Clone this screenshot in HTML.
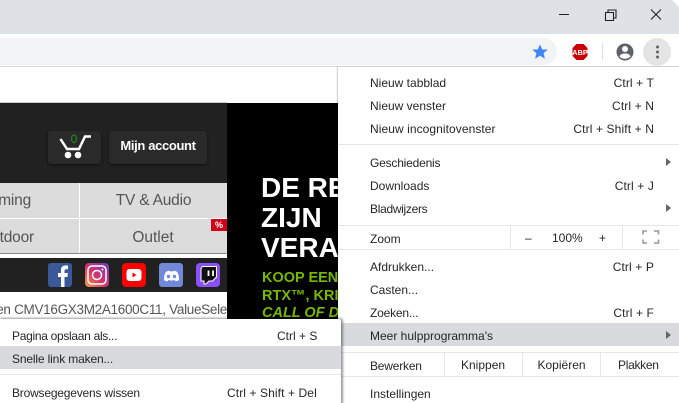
<!DOCTYPE html>
<html><head><meta charset="utf-8">
<style>
html,body{margin:0;padding:0}
body{width:679px;height:403px;overflow:hidden;position:relative;background:#fff;font-family:"Liberation Sans",sans-serif}
.a{position:absolute}
.t{position:absolute;font-size:12px;line-height:16px;color:#262626;white-space:nowrap}
.r{position:absolute;font-size:12px;line-height:16px;color:#262626;white-space:nowrap;right:25px;letter-spacing:.12px}
.l{position:absolute;left:338px;right:0;height:1px;background:#e6e6e6}
.v{position:absolute;width:1px;background:#e6e6e6}
.g{position:absolute;font-size:15.5px;line-height:20px;color:#555;white-space:nowrap;text-align:center;letter-spacing:-.2px}
.ar{position:absolute;left:666px;width:0;height:0;border-left:5px solid #666;border-top:4px solid transparent;border-bottom:4px solid transparent}
.big{position:absolute;color:#fff;font-size:28px;line-height:30px;font-weight:bold;white-space:nowrap}
.gr{position:absolute;color:#76b900;font-size:14.5px;line-height:16px;font-weight:bold;white-space:nowrap}
</style></head>
<body>
<!-- browser chrome -->
<div class="a" style="left:0;top:0;width:679px;height:34px;background:#dee1e6"></div>
<div class="a" style="left:672px;top:0;width:7px;height:7px;background:#fff;clip-path:polygon(0 0,100% 0,100% 100%)"></div>
<div class="a" style="left:0;top:34px;width:679px;height:32px;background:#fff"></div>
<div class="a" style="left:0;top:66px;width:679px;height:1px;background:#d8d8d8"></div>
<div class="a" style="left:-20px;top:38px;width:577px;height:27px;background:#f1f3f4;border-radius:14px"></div>
<svg class="a" style="left:0;top:0" width="679" height="67" viewBox="0 0 679 67">
 <path d="M559 14.500h10" stroke="#222" stroke-width="1" fill="none"/>
 <path d="M605.500 12.500h8v8h-8zM608 12.500v-2.500h8v8h-2.500" stroke="#222" stroke-width="1.100" fill="none"/>
 <path d="M651 9.500l10 10M661 9.500l-10 10" stroke="#222" stroke-width="1.100" fill="none"/>
 <path d="M540 44.500l2.300 5h5.500l-4.200 3.800 1.300 5.500-4.900-3-4.900 3 1.300-5.500-4.200-3.800h5.500z" fill="#4285f4"/>
 <path d="M576.500 44h7l4 4v8l-4 4h-7l-4-4v-8z" fill="#c00"/>
 <text x="580" y="55" font-family="Liberation Sans" font-size="7.500" font-weight="bold" fill="#fff" text-anchor="middle">ABP</text>
 <path d="M602.500 43v17" stroke="#ddd" stroke-width="1"/>
 <circle cx="625" cy="52" r="8.500" fill="#5f6368"/>
 <circle cx="625" cy="49" r="3" fill="#fff"/>
 <path d="M619.500 56.500c1-2.500 3-3 5.500-3s4.500 .5 5.500 3c-1.500 1.500-3.300 2.200-5.500 2.200s-4-.7-5.500-2.200z" fill="#fff"/>
 <circle cx="657" cy="52" r="14" fill="#e4e4e4"/>
 <circle cx="657.500" cy="47" r="1.500" fill="#5f6368"/><circle cx="657.500" cy="52" r="1.500" fill="#5f6368"/><circle cx="657.500" cy="57" r="1.500" fill="#5f6368"/>
</svg>

<!-- page -->
<div class="a" style="left:0;top:102px;width:227px;height:1px;background:#ccc"></div>
<div class="a" style="left:0;top:103px;width:227px;height:80px;background:#212121"></div>
<div class="a" style="left:48px;top:131px;width:53px;height:33px;background:#2a2a2a;border-radius:3px;box-shadow:0 1px 2px #111"></div>
<svg class="a" style="left:48px;top:131px" width="53" height="33">
 <path d="M12.500 8l6.500 10h12l6-12.500h6" stroke="#fff" stroke-width="2.500" fill="none"/>
 <circle cx="20" cy="24" r="3.300" fill="#fff"/><circle cx="30" cy="24" r="3.300" fill="#fff"/>
 <text x="26" y="12" font-family="Liberation Sans" font-size="12" fill="#1c9c1c" text-anchor="middle">0</text>
</svg>
<div class="a" style="left:109px;top:131px;width:98px;height:33px;background:#2a2a2a;border-radius:3px;box-shadow:0 1px 2px #111;color:#fff;font-size:13px;font-weight:bold;line-height:30px;text-align:center;letter-spacing:-.35px">Mijn account</div>

<div class="a" style="left:0;top:183px;width:227px;height:70px;background:#dcdcdc"></div>
<div class="a" style="left:79px;top:183px;width:1px;height:70px;background:#fff"></div>
<div class="a" style="left:0;top:218px;width:227px;height:1px;background:#fff"></div>
<div class="a" style="left:0;top:253px;width:227px;height:1px;background:#888"></div>
<div class="g" style="right:648px;top:191px">ming</div>
<div class="g" style="left:80px;width:147px;top:191px">TV &amp; Audio</div>
<div class="g" style="right:645px;top:228px">tdoor</div>
<div class="g" style="left:80px;width:146px;top:228px;letter-spacing:0">Outlet</div>
<div class="a" style="left:211px;top:219px;width:16px;height:12px;background:#d0021b;color:#fff;font-size:9px;font-weight:bold;line-height:12px;text-align:center">%</div>

<div class="a" style="left:0;top:258px;width:227px;height:34px;background:#212121"></div>
<svg class="a" style="left:48px;top:263px" width="172" height="24">
 <rect x="0" y="0" width="24" height="24" rx="3" fill="#3b5998"/>
 <path d="M13 24v-10h-3v-4h3v-3c0-3 1.800-4.500 4.300-4.500h2.700v3.800h-1.800c-1.300 0-1.700.7-1.700 1.700v2h3.400l-.5 4h-2.900v10z" fill="#fff"/>
 <defs><linearGradient id="ig" x1="0" y1="1" x2="1" y2="0"><stop offset="0" stop-color="#f9a03c"/><stop offset=".45" stop-color="#d6336c"/><stop offset="1" stop-color="#6a3fc4"/></linearGradient></defs>
 <rect x="37" y="0" width="24" height="24" rx="4" fill="url(#ig)"/>
 <rect x="40" y="3" width="18" height="18" rx="4" fill="none" stroke="#fff" stroke-width="1.500"/>
 <circle cx="49" cy="12" r="4.500" fill="none" stroke="#fff" stroke-width="1.500"/>
 <circle cx="54.500" cy="6.500" r="1" fill="#fff"/>
 <rect x="74" y="0" width="24" height="24" rx="4" fill="#f00"/>
 <rect x="78.500" y="6" width="15" height="12" rx="3" fill="#fff"/>
 <path d="M84.500 9.500v5l4-2.500z" fill="#f00"/>
 <rect x="111" y="0" width="24" height="24" rx="3" fill="#7289da"/>
 <path d="M116 17c-.2-3.500.6-6 1.800-8 1.500-.9 3-1.200 3.700-1.200l.4.700c1-.2 2.200-.2 3.200 0l.4-.7c.8 0 2.200.3 3.700 1.200 1.200 2 2 4.500 1.800 8-1.200.9-2.500 1.300-3.300 1.400l-.9-1.400c-2.200.6-4.400.6-6.600 0l-.9 1.400c-.8-.1-2.100-.5-3.300-1.400z" fill="#fff"/>
 <circle cx="120.500" cy="13.500" r="1.700" fill="#7289da"/><circle cx="126.500" cy="13.500" r="1.700" fill="#7289da"/>
 <rect x="148" y="0" width="24" height="24" rx="4" fill="#8a4fff"/>
 <path d="M153 5.500l1.500-2h14v10.500l-4 4h-3.500l-3 3h-2v-3h-3z" fill="#111" stroke="#fff" stroke-width="1"/>
 <path d="M160.500 7.500v5.500M165 7.500v5.500" stroke="#fff" stroke-width="1.800"/>
</svg>
<div class="a" style="left:0;top:302px;width:227px;height:17px;overflow:hidden">
 <div class="a" style="right:0;top:0;font-size:13.500px;line-height:16px;color:#555;white-space:nowrap;letter-spacing:-.3px">en CMV16GX3M2A1600C11, ValueSele</div>
</div>

<!-- ad -->
<div class="a" style="left:227px;top:103px;width:111px;height:217px;background:#000;overflow:hidden">
 <div class="big" style="left:34px;top:70px">DE RE</div>
 <div class="big" style="left:34px;top:100px">ZIJN</div>
 <div class="big" style="left:34px;top:130px">VERA</div>
 <div class="gr" style="left:35px;top:167px">KOOP EEN</div>
 <div class="gr" style="left:35px;top:185px">RTX™, KRI</div>
 <div class="gr" style="left:35px;top:202px;font-style:italic">CALL OF D</div>
</div>

<!-- main menu -->
<div class="a" style="left:338px;top:67px;width:341px;height:336px;background:#fff;box-shadow:-1px 0 1px rgba(0,0,0,.2)"></div>
<div class="a" style="left:338px;top:323px;width:341px;height:23px;background:#d9dadd"></div>
<div class="l" style="top:144px"></div>
<div class="l" style="top:225px"></div>
<div class="l" style="top:249px"></div>
<div class="l" style="top:352px"></div>
<div class="l" style="top:376px"></div>
<div class="v" style="left:510px;top:225px;height:24px"></div>
<div class="v" style="left:622px;top:225px;height:24px"></div>
<div class="v" style="left:444px;top:352px;height:24px"></div>
<div class="v" style="left:522px;top:352px;height:24px"></div>
<div class="v" style="left:600px;top:352px;height:24px"></div>

<div class="t" style="left:370px;top:75px">Nieuw tabblad</div><div class="r" style="top:75px">Ctrl + T</div>
<div class="t" style="left:370px;top:98px">Nieuw venster</div><div class="r" style="top:98px">Ctrl + N</div>
<div class="t" style="left:370px;top:121px;letter-spacing:.07px">Nieuw incognitovenster</div><div class="r" style="top:121px">Ctrl + Shift + N</div>
<div class="t" style="left:370px;top:155px;letter-spacing:-.2px">Geschiedenis</div><div class="ar" style="top:158px"></div>
<div class="t" style="left:370px;top:178px">Downloads</div><div class="r" style="top:178px">Ctrl + J</div>
<div class="t" style="left:370px;top:201px;letter-spacing:-.3px">Bladwijzers</div><div class="ar" style="top:204px"></div>
<div class="t" style="left:370px;top:231px">Zoom</div>
<div class="t" style="left:525px;top:230px">–</div>
<div class="t" style="left:552px;top:230px">100%</div>
<div class="t" style="left:599px;top:230px">+</div>
<svg class="a" style="left:642px;top:230px" width="18" height="14"><path d="M1 4.500V1h4M12 1h4.500v3.500M1 9.500V13h4M12 13h4.500V9.500" stroke="#999" stroke-width="1.600" fill="none"/></svg>
<div class="t" style="left:370px;top:259px">Afdrukken...</div><div class="r" style="top:259px">Ctrl + P</div>
<div class="t" style="left:370px;top:282px">Casten...</div>
<div class="t" style="left:370px;top:305px;letter-spacing:-.2px">Zoeken...</div><div class="r" style="top:305px">Ctrl + F</div>
<div class="t" style="left:370px;top:328px">Meer hulpprogramma's</div><div class="ar" style="top:331px"></div>
<div class="t" style="left:370px;top:358px;letter-spacing:-.2px">Bewerken</div>
<div class="t" style="left:461px;top:357px">Knippen</div>
<div class="t" style="left:537.500px;top:357px">Kopiëren</div>
<div class="t" style="left:618px;top:357px;letter-spacing:-.3px">Plakken</div>
<div class="t" style="left:370px;top:386px">Instellingen</div>

<!-- submenu -->
<div class="a" style="left:0;top:319px;width:341px;height:84px;background:#fff;border-radius:0 2px 0 0;box-shadow:1px 0 2px 1px rgba(0,0,0,.4)"></div>
<div class="a" style="left:0;top:346px;width:341px;height:23px;background:#d9dadd"></div>
<div class="a" style="left:0;top:374px;width:341px;height:1px;background:#e6e6e6"></div>
<div class="t" style="left:12px;top:328px;letter-spacing:-.3px">Pagina opslaan als...</div>
<div class="t" style="left:277px;top:328px">Ctrl + S</div>
<div class="t" style="left:12px;top:351px;letter-spacing:-.15px">Snelle link maken...</div>
<div class="t" style="left:12px;top:385px;letter-spacing:-.2px">Browsegegevens wissen</div>
<div class="t" style="left:227px;top:385px;letter-spacing:.1px">Ctrl + Shift + Del</div>
</body></html>
